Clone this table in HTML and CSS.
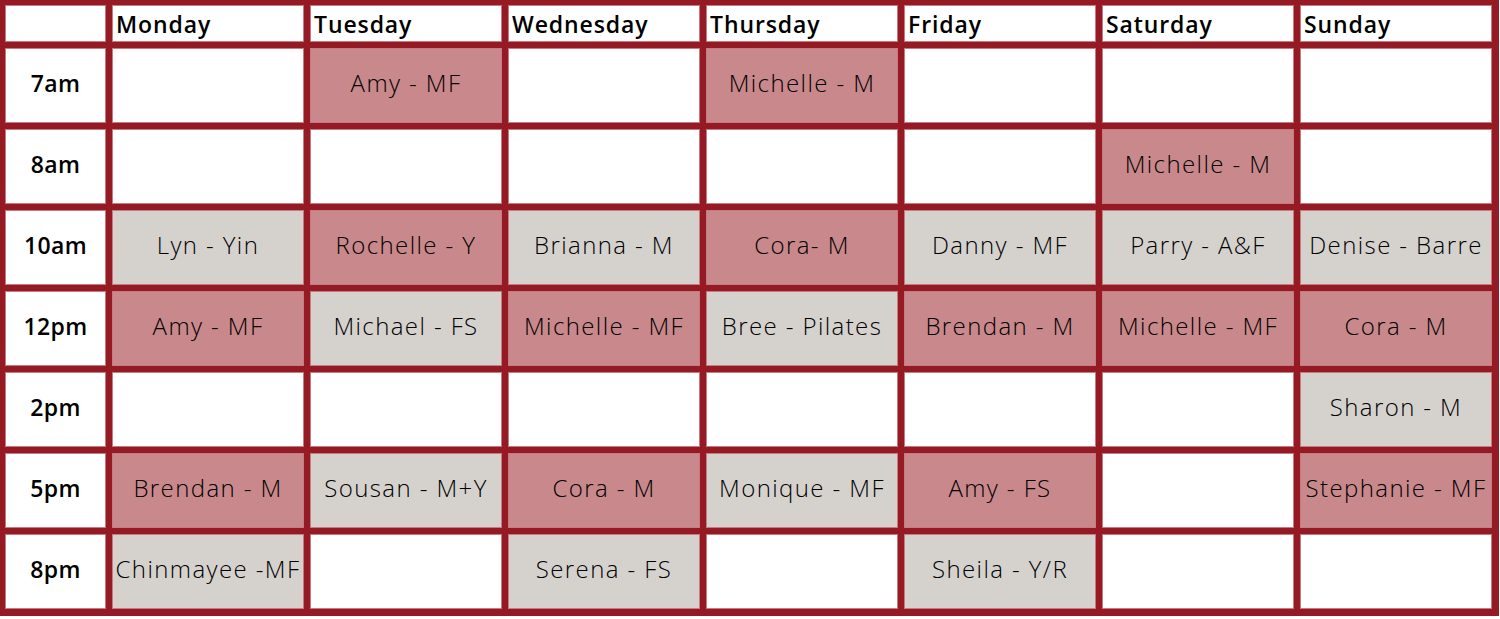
FILE: index.html
```html
<!DOCTYPE html>
<html>
<head>
<meta charset="utf-8">
<link rel="stylesheet" href="styles.css">
</head>
<body>
<div class="schedule">
  <div class="cell head"></div>
  <div class="cell head day">Monday</div>
  <div class="cell head day">Tuesday</div>
  <div class="cell head day">Wednesday</div>
  <div class="cell head day">Thursday</div>
  <div class="cell head day">Friday</div>
  <div class="cell head day">Saturday</div>
  <div class="cell head day">Sunday</div>

  <div class="cell time">7am</div>
  <div class="cell"></div>
  <div class="cell pink">Amy - MF</div>
  <div class="cell"></div>
  <div class="cell pink">Michelle - M</div>
  <div class="cell"></div>
  <div class="cell"></div>
  <div class="cell"></div>

  <div class="cell time">8am</div>
  <div class="cell"></div>
  <div class="cell"></div>
  <div class="cell"></div>
  <div class="cell"></div>
  <div class="cell"></div>
  <div class="cell pink">Michelle - M</div>
  <div class="cell"></div>

  <div class="cell time">10am</div>
  <div class="cell gray">Lyn - Yin</div>
  <div class="cell pink">Rochelle - Y</div>
  <div class="cell gray">Brianna - M</div>
  <div class="cell pink">Cora- M</div>
  <div class="cell gray">Danny - MF</div>
  <div class="cell gray">Parry - A&amp;F</div>
  <div class="cell gray">Denise - Barre</div>

  <div class="cell time">12pm</div>
  <div class="cell pink">Amy - MF</div>
  <div class="cell gray">Michael - FS</div>
  <div class="cell pink">Michelle - MF</div>
  <div class="cell gray">Bree - Pilates</div>
  <div class="cell pink">Brendan - M</div>
  <div class="cell pink">Michelle - MF</div>
  <div class="cell pink">Cora - M</div>

  <div class="cell time">2pm</div>
  <div class="cell"></div>
  <div class="cell"></div>
  <div class="cell"></div>
  <div class="cell"></div>
  <div class="cell"></div>
  <div class="cell"></div>
  <div class="cell gray">Sharon - M</div>

  <div class="cell time">5pm</div>
  <div class="cell pink">Brendan - M</div>
  <div class="cell gray">Sousan - M+Y</div>
  <div class="cell pink">Cora - M</div>
  <div class="cell gray">Monique - MF</div>
  <div class="cell pink">Amy - FS</div>
  <div class="cell"></div>
  <div class="cell pink">Stephanie - MF</div>

  <div class="cell time">8pm</div>
  <div class="cell gray">Chinmayee -MF</div>
  <div class="cell"></div>
  <div class="cell gray">Serena - FS</div>
  <div class="cell"></div>
  <div class="cell gray">Sheila - Y/R</div>
  <div class="cell"></div>
  <div class="cell"></div>
</div>
</body>
</html>
```

FILE: styles.css
```css
html, body {
  margin: 0;
  padding: 0;
  background: #ffffff;
}

.schedule {
  display: grid;
  grid-template-columns: 101px repeat(7, 192px);
  grid-template-rows: 37px repeat(7, 75px);
  gap: 6px;
  padding: 5px 7px 7px 5px;
  width: max-content;
  background: #951a24;
  font-family: "Open Sans", "Liberation Sans", sans-serif;
  color: #000000;
}

.cell {
  box-sizing: border-box;
  background: #ffffff;
  border: 1px solid #c47c82;
  display: flex;
  align-items: center;
  justify-content: center;
  padding-bottom: 6px;
  font-size: 24px;
  font-weight: 300;
  white-space: nowrap;
  overflow: hidden;
  letter-spacing: 1.4px;
}

.pink {
  background: #c9888b;
}

.gray {
  background: #d5d2ce;
}

.head.day {
  justify-content: flex-start;
  align-items: flex-end;
  padding: 0 0 1px 3px;
  font-size: 23px;
  font-weight: 600;
  letter-spacing: 0.9px;
}

.time {
  font-size: 23px;
  font-weight: 600;
  letter-spacing: 0.4px;
}
```
